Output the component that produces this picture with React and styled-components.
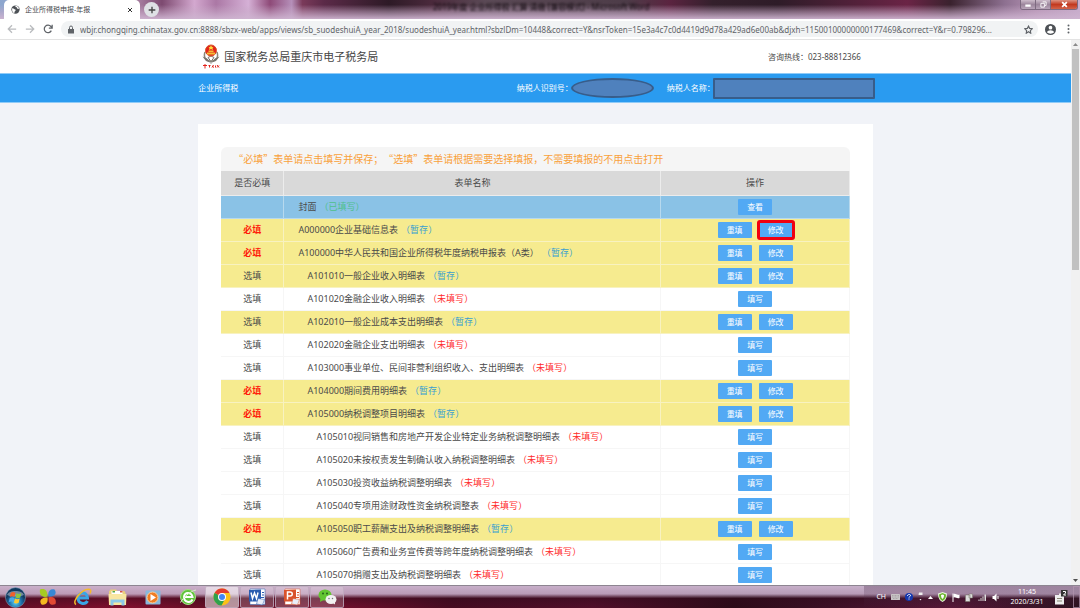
import React from "react";
import styled, { createGlobalStyle, css } from "styled-components";

const Global = createGlobalStyle`
  * { box-sizing: border-box; }
  html, body { margin: 0; padding: 0; }
  body {
    font-family: "Noto Sans", "Noto Sans CJK SC", sans-serif;
    font-size: 9px;
    line-height: 12px;
    color: #4a4a4a;
    background: #f1f3f8;
    text-spacing-trim: space-all;
  }
  button { font-family: inherit; border: 0; padding: 0; margin: 0; background: none; color: inherit; }
  svg { display: block; flex: none; }
`;

const Screen = styled.div`
  height: 100vh;
  display: flex;
  flex-direction: column;
  overflow: hidden;
`;

/* ---------- browser frame ---------- */
const TabStrip = styled.div`
  position: relative;
  height: 19px;
  flex: none;
  display: flex;
  align-items: flex-start;
  background:
    linear-gradient(180deg, rgba(200,170,200,0) 25%, rgba(200,170,200,0.5) 60%, rgba(206,180,208,0.95) 100%),
    linear-gradient(90deg, #8da7cf 0, #a37a9c 13%, #7d4a70 15%, #d3a8cf 18%, #ab78a5 20%, #d5b0d6 23%, #8e4a78 25%, #b58fb9 27%, #7a3a5a 28%, #5b2a48 30%, #2d1a26 36%, #4b2a3c 40%, #5b4a56 45%, #4d3c48 58%, #5b2440 62%, #34202c 66%, #2e1c28 72%, #6b2446 84%, #3a222e 88%, #8d7090 93%, #b593b4 96%, #c9b1d0 100%);
`;

const Tab = styled.div`
  width: 136px;
  height: 19px;
  margin-left: 4px;
  padding: 0 6px 0 7px;
  display: flex;
  align-items: center;
  gap: 5px;
  background: #fff;
  border-radius: 5px 5px 0 0;
  font-size: 7px;
  color: #45484c;
`;

const TabTitle = styled.span`
  flex: 1;
  white-space: nowrap;
`;

const IconButton = styled.button`
  width: ${(p) => p.$size || 12}px;
  height: ${(p) => p.$size || 12}px;
  display: flex;
  align-items: center;
  justify-content: center;
  flex: none;
`;

const NewTab = styled(IconButton)`
  margin: 2px 0 0 4px;
  border-radius: 50%;
  background: #dfe1e5;
`;

const BlurredTitle = styled.div`
  flex: 1;
  padding: 0 20px 0 274px;
  font-size: 8px;
  line-height: 14px;
  white-space: nowrap;
  overflow: hidden;
  color: #120a10;
  filter: blur(1px);
`;

const WindowControls = styled.div`
  display: flex;
  margin-right: 2px;
  border: 1px solid #7d6a80;
  border-top: 0;
  border-radius: 0 0 3px 3px;
  overflow: hidden;
`;

const WindowButton = styled.button`
  width: ${(p) => (p.$close ? 26 : 15)}px;
  height: 9px;
  display: flex;
  align-items: center;
  justify-content: center;
  border-right: ${(p) => (p.$close ? 0 : 1)}px solid #7d6a80;
  background: ${(p) =>
    p.$close
      ? "linear-gradient(#dc9383, #c2391f 50%, #d3634a)"
      : "linear-gradient(#cdbccb, #9c869c 50%, #b8a4b9)"};
`;

const Toolbar = styled.div`
  height: 21px;
  flex: none;
  display: flex;
  align-items: center;
  gap: 6px;
  padding: 0 6px;
  background: #fff;
  border-bottom: 1px solid #e3e3e3;
`;

const AddressBar = styled.div`
  flex: 1;
  min-width: 0;
  height: 16px;
  margin-left: 1px;
  padding: 0 5px 0 6px;
  display: flex;
  align-items: center;
  gap: 5px;
  border-radius: 8px;
  background: #f1f3f4;
`;

const AddressInput = styled.input`
  flex: 1;
  min-width: 0;
  height: 14px;
  padding: 0;
  border: 0;
  background: none;
  font-family: "Noto Sans", sans-serif;
  font-size: 8px;
  color: #5f6368;
  text-overflow: ellipsis;
`;

/* ---------- web page ---------- */
const Viewport = styled.div`
  flex: 1;
  min-height: 0;
  display: flex;
`;

const Page = styled.main`
  flex: 1;
  min-width: 0;
  overflow: hidden;
  background: #f1f3f8;
`;

const Container = styled.div`
  width: 63%;
  margin: 0 auto;
  display: flex;
  align-items: center;
`;

const SiteHeader = styled.header`
  height: 33px;
  background: #fff;
  display: flex;
  align-items: center;
`;

const Brand = styled.h1`
  flex: 1;
  margin: 0;
  padding-left: 4px;
  display: flex;
  align-items: center;
  gap: 4px;
  font-size: 11px;
  line-height: 16px;
  font-weight: 400;
  color: #444;
`;

const Hotline = styled.span`
  padding-right: 12px;
  font-size: 8px;
`;

const BlueBar = styled.div`
  height: 30px;
  display: flex;
  align-items: center;
  background: #2a9bf0;
  border-top: 1px solid #8fcbf8;
  border-bottom: 1px solid #8fcbf8;
  color: #fff;
  font-size: 8px;
`;

const BarTitle = styled.span`
  flex: 1;
`;

const Mask = styled.span`
  width: ${(p) => (p.$round ? 83 : 162)}px;
  height: ${(p) => (p.$round ? 20 : 21)}px;
  margin-left: -2px;
  margin-right: ${(p) => (p.$round ? 13 : -2)}px;
  border: 2px solid #385d8a;
  border-radius: ${(p) => (p.$round ? "50%" : "1px")};
  background: #4f81bd;
`;

const Card = styled.section`
  width: 63%;
  margin: 21px auto 0;
  padding: 23px 23px 40px;
  background: #fff;
`;

const Notice = styled.p`
  height: 24px;
  margin: 0;
  padding-left: 12px;
  border-radius: 6px 6px 0 0;
  background: #f5f5f5;
  color: #f9a13a;
  font-family: "Noto Sans CJK SC", sans-serif;
  font-size: 10px;
  line-height: 24px;
  white-space: nowrap;
`;

const Table = styled.table`
  width: 100%;
  border-collapse: collapse;
  table-layout: fixed;
`;

const HeadCell = styled.th`
  width: ${(p) => p.$width};
  height: 24px;
  padding: 0;
  background: #d9d9d9;
  border: 1px solid #ececec;
  border-width: 0 1px 1px 0;
  font-weight: 400;
  text-align: center;
`;

const tones = {
  blue: css`background: #8ac2e6; --line: #b7d9ee;`,
  yellow: css`background: #f6eb8f; --line: #f8f2c0;`,
  plain: css`background: #fff; --line: #f6f6f6;`,
};

const Row = styled.tr`
  ${(p) => tones[p.$tone]}
`;

const Cell = styled.td`
  height: 23px;
  padding: 0;
  border: 1px solid var(--line);
  border-width: 0 1px 1px 0;
  text-align: center;
`;

const NeedCell = styled(Cell)`
  color: ${(p) => (p.$must ? "#ff1a0a" : "#4a4a4a")};
  font-weight: ${(p) => (p.$must ? 700 : 400)};
`;

const NameCell = styled(Cell)`
  padding-left: ${(p) => 14 + p.$level * 9}px;
  text-align: left;
  white-space: nowrap;
`;

const Status = styled.span`
  margin-left: 3px;
  color: ${(p) => ({ 已填写: "#4fc08d", 暂存: "#3a9fd0", 未填写: "#ff2a2a" })[p.$kind]};
`;

const Actions = styled.div`
  display: flex;
  justify-content: center;
  gap: 7px;
`;

const ActionButton = styled.button`
  width: 34px;
  height: 16px;
  border-radius: 1px;
  background: #52a9f4;
  color: #fff;
  font-size: 8px;
  line-height: 14px;
  ${(p) => p.$marked && css`outline: 3px solid #f00010; outline-offset: -1px;`}
`;

const ScrollBar = styled.div`
  width: 9px;
  flex: none;
  display: flex;
  flex-direction: column;
  align-items: center;
  padding: 3px 1px;
  background: #f1f1f1;
`;

const Thumb = styled.div`
  width: 7px;
  height: 41%;
  margin: 3px 0 auto;
  background: #c1c1c1;
`;

/* ---------- task bar ---------- */
const TaskBar = styled.footer`
  height: 23px;
  flex: none;
  display: flex;
  align-items: center;
  border-top: 1px solid #8d8591;
  background:
    linear-gradient(180deg, rgba(206,184,210,0.95) 0, rgba(196,170,198,0.9) 36%, rgba(50,10,28,0.5) 56%, rgba(60,8,28,0.1) 100%),
    linear-gradient(90deg, #6a1028 0, #8b1030 12%, #6a1026 20%, #7e1030 30%, #470c22 42%, #54102c 55%, #2a0c18 68%, #3b1026 76%, #5b1a3c 88%, #2b1420 100%);
`;

const TaskButton = styled.button`
  width: ${(p) => (p.$start ? 30 : p.$open ? 34 : 35)}px;
  height: 22px;
  display: flex;
  align-items: center;
  justify-content: center;
  ${(p) =>
    p.$open &&
    css`
      margin-right: 1px;
      border: 1px solid rgba(190, 170, 190, 0.8);
      border-radius: 2px;
      background: rgba(255, 255, 255, ${p.$active ? 0.55 : 0.2});
    `}
`;

const Tray = styled.div`
  align-self: stretch;
  margin-left: auto;
  padding-left: 12px;
  display: flex;
  align-items: center;
  gap: 5px;
  color: #fff;
  font-size: 7px;
  background: linear-gradient(180deg, rgba(80, 50, 80, 0.35), rgba(80, 50, 80, 0));
`;

const Clock = styled.time`
  width: 44px;
  text-align: center;
  font-size: 7px;
  line-height: 10px;
`;

const ShowDesktop = styled.button`
  width: 7px;
  height: 22px;
  border: 1px solid rgba(180, 150, 175, 0.7);
`;

const Globe = () => (
  <svg width="9" height="9" viewBox="0 0 24 24">
    <circle cx="12" cy="12" r="11" fill="#4d5156" />
    <path d="M3 9c4-1 5 3 8 3s1 4-1 5 0 4-1 5C5 20 2 16 3 9zM12 2c-1 3 1 4 3 4s0 3 2 4 4-1 5 0c-1-4-5-8-10-8z" fill="#fff" />
  </svg>
);
const Stroke = ({ d, size = 10, color = "#5f6368", width = 2, fill = "none" }) => (
  <svg width={size} height={size} viewBox="0 0 24 24" fill={fill} stroke={color} strokeWidth={width}>
    <path d={d} />
  </svg>
);

const Emblem = () => (
  <svg width="18" height="25" viewBox="0 0 36 50">
    <path d="M6 16c-4 12 3 18 12 19 9-1 16-7 12-19" fill="none" stroke="#8b8578" strokeWidth="3" />
    <path d="M1 25l9 4 8 9 8-9 9-4-7 9-8 3-2 3-2-3-8-3z" fill="#77736c" />
    <path d="M12 27l6-3 6 3-6 8z" fill="#fff" stroke="#77736c" strokeWidth="2" />
    <circle cx="18" cy="13" r="11" fill="#e2231a" stroke="#d9552a" strokeWidth="2" />
    <path d="M18 3l2 3h3l-2 2 1 4-4-2-4 2 1-4-2-2h3z" fill="#ffdc3c" />
    <path d="M10 17h16v4H10zM13 13h10v3H13z" fill="#f4be36" />
    <path d="M2 43h8M6 40v9M13 43h4M15 42v5M20 44l4 3M23 42l-3 5M27 43v4M30 42l4 5M34 43l-4 4" stroke="#e2231a" strokeWidth="2" fill="none" />
  </svg>
);

const WindowsOrb = () => (
  <svg width="21" height="21" viewBox="0 0 40 40">
    <defs>
      <radialGradient id="orb" cx="50%" cy="75%"><stop offset="0" stopColor="#5fd5f5" /><stop offset=".6" stopColor="#1e6fa8" /><stop offset="1" stopColor="#12395f" /></radialGradient>
    </defs>
    <circle cx="20" cy="20" r="19" fill="url(#orb)" stroke="#8eb4cc" />
    <path d="M4 15C7 5 33 5 36 15c-9 4-23 4-32 0z" fill="#fff" opacity=".4" />
    <path d="M11 11c3-2 6-2 9 0l-2 8c-3-2-6-2-9 0z" fill="#f0602c" />
    <path d="M22 12c3 2 6 2 9 0l-2 8c-3 2-6 2-9 0z" fill="#8cc63f" />
    <path d="M9 21c3-2 6-2 9 0l-2 8c-3-2-6-2-9 0z" fill="#49a8e8" />
    <path d="M19 22c3 2 6 2 9 0l-2 8c-3 2-6 2-9 0z" fill="#fdc82f" />
  </svg>
);
const Petals = () => (
  <svg width="18" height="18" viewBox="0 0 36 36">
    <path d="M2 3c9-3 15 1 15 14C7 20 0 14 2 3z" fill="#a6cb22" />
    <path d="M19 17c-2-10 3-16 12-14 6 8 0 15-12 14z" fill="#3888d6" />
    <path d="M17 19c2 10-3 16-12 14-6-8 0-15 12-14z" fill="#f4b91e" />
    <path d="M19 19c10-3 17 3 14 13-9 5-15-2-14-13z" fill="#e24a33" />
  </svg>
);
const IE = () => (
  <svg width="19" height="18" viewBox="0 0 38 36">
    <path d="M29 26c-5 8-19 6-19-6s18-14 19 0H12" fill="none" stroke="#39a5e6" strokeWidth="6" />
    <path d="M6 33C-4 27 20-1 34 3c3 2 1 6 0 8" fill="none" stroke="#f3b92b" strokeWidth="3" />
  </svg>
);
const Folder = () => (
  <svg width="19" height="17" viewBox="0 0 38 34">
    <path d="M2 5l3-4h11l3 3h14l2 4v23H2z" fill="#e9cf7b" />
    <path d="M7 4h22v8H7z" fill="#fff" /><path d="M9 4h5v3H9z" fill="#56a844" /><path d="M24 4h5v3h-5z" fill="#d85443" />
    <path d="M1 10h36l-1 22H2z" fill="#f8e6a1" />
    <path d="M5 33V21h28v12h-6v-6H11v6z" fill="#8cc9ea" />
  </svg>
);
const Player = () => (
  <svg width="16" height="15" viewBox="0 0 32 30">
    <rect x="1" y="1" width="30" height="28" rx="2" fill="#88b8dc" />
    <circle cx="15" cy="15" r="11" fill="#ee7d24" stroke="#fbd0a3" strokeWidth="2" />
    <path d="M11 8l11 7-11 7z" fill="#fff" />
  </svg>
);
const GreenE = () => (
  <svg width="18" height="18" viewBox="0 0 36 36">
    <circle cx="18" cy="18" r="15" fill="#62c43c" stroke="#a6dd8c" strokeWidth="2" />
    <path d="M27 23c-4 8-17 6-17-5s15-10 17 0H12" fill="none" stroke="#fff" strokeWidth="4" />
    <path d="M3 29C8 20 22 6 34 4" fill="none" stroke="#d8f5c8" strokeWidth="2" />
  </svg>
);
const Chrome = () => (
  <svg width="18" height="18" viewBox="0 0 36 36">
    <circle cx="18" cy="18" r="17" fill="#fbc116" />
    <path d="M3.300 9.500A17 17 0 0 0 17 35l7-13-6-4z" fill="#2fa24c" />
    <path d="M3.300 9.500A17 17 0 0 1 33 10H18v8z" fill="#e33b2e" />
    <circle cx="18" cy="18" r="8" fill="#fff" /><circle cx="18" cy="18" r="6" fill="#4285f4" />
  </svg>
);
const Office = ({ color, d }) => (
  <svg width="18" height="18" viewBox="0 0 36 36">
    <path d="M4 2h30v31H4z" fill="#fff" stroke={color} />
    <path d="M28 9h4M28 14h4M26 19h6" stroke={color} strokeWidth="2" />
    <path d="M2 4l24-1v24L2 27z" fill={color} />
    <path d={d} fill="none" stroke="#fff" strokeWidth="3" />
    <path d="M20 21l13 2-4 11-12-2z" fill="#e9eef8" stroke={color} />
  </svg>
);
const WeChat = () => (
  <svg width="19" height="16" viewBox="0 0 38 32">
    <ellipse cx="14" cy="12" rx="13" ry="11" fill="#62c531" /><path d="M5 19l-1 7 7-4z" fill="#62c531" />
    <ellipse cx="26" cy="21" rx="11" ry="9" fill="#f2f2f2" /><path d="M30 28l4 3v-6z" fill="#f2f2f2" />
    <circle cx="10" cy="9" r="2" fill="#25601a" /><circle cx="18" cy="9" r="2" fill="#25601a" />
    <circle cx="22" cy="19" r="1.500" fill="#777" /><circle cx="29" cy="19" r="1.500" fill="#777" />
  </svg>
);

const forms = [
  ["", "封面", 0, "已填写"],
  ["必填", "A000000企业基础信息表", 0, "暂存", true],
  ["必填", "A100000中华人民共和国企业所得税年度纳税申报表（A类）", 0, "暂存"],
  ["选填", "A101010一般企业收入明细表", 1, "暂存"],
  ["选填", "A101020金融企业收入明细表", 1, "未填写"],
  ["选填", "A102010一般企业成本支出明细表", 1, "暂存"],
  ["选填", "A102020金融企业支出明细表", 1, "未填写"],
  ["选填", "A103000事业单位、民间非营利组织收入、支出明细表", 1, "未填写"],
  ["必填", "A104000期间费用明细表", 1, "暂存"],
  ["必填", "A105000纳税调整项目明细表", 1, "暂存"],
  ["选填", "A105010视同销售和房地产开发企业特定业务纳税调整明细表", 2, "未填写"],
  ["选填", "A105020未按权责发生制确认收入纳税调整明细表", 2, "未填写"],
  ["选填", "A105030投资收益纳税调整明细表", 2, "未填写"],
  ["选填", "A105040专项用途财政性资金纳税调整表", 2, "未填写"],
  ["必填", "A105050职工薪酬支出及纳税调整明细表", 2, "暂存"],
  ["选填", "A105060广告费和业务宣传费等跨年度纳税调整明细表", 2, "未填写"],
  ["选填", "A105070捐赠支出及纳税调整明细表", 2, "未填写"],
];
const toneOf = { 已填写: "blue", 暂存: "yellow", 未填写: "plain" };
const actionsOf = { 已填写: ["查看"], 暂存: ["重填", "修改"], 未填写: ["填写"] };

const url =
  "wbjr.chongqing.chinatax.gov.cn:8888/sbzx-web/apps/views/sb_suodeshuiA_year_2018/suodeshuiA_year.html?sbzlDm=10448&correct=Y&nsrToken=15e3a4c7c0d4419d9d78a429ad6e00ab&djxh=11500100000000177469&correct=Y&r=0.798296...";

export default function App() {
  return (
    <Screen>
      <Global />
      <TabStrip>
        <Tab>
          <Globe />
          <TabTitle>企业所得税申报-年报</TabTitle>
          <IconButton aria-label="关闭标签页" $size={8}>
            <Stroke d="M4 4l16 16M20 4L4 20" size={6} width={4} color="#333" />
          </IconButton>
        </Tab>
        <NewTab aria-label="新标签页" $size={15}>
          <Stroke d="M12 2v20M2 12h20" size={8} width={4} color="#444" />
        </NewTab>
        <BlurredTitle>2019年度 企业所得税 汇算 清缴 [兼容模式] - Microsoft Word</BlurredTitle>
        <WindowControls>
          <WindowButton aria-label="最小化"><Stroke d="M4 14h16" size={8} width={7} color="#fff" /></WindowButton>
          <WindowButton aria-label="还原"><Stroke d="M9 3h12v12h-5M3 8h12v13H3z" size={7} width={3} color="#fff" /></WindowButton>
          <WindowButton aria-label="关闭" $close><Stroke d="M4 4l16 16M20 4L4 20" size={7} width={6} color="#fff" /></WindowButton>
        </WindowControls>
      </TabStrip>

      <Toolbar>
        <IconButton aria-label="后退"><Stroke d="M22 12H4M12 3l-9 9 9 9" color="#b9bbbe" width={3} /></IconButton>
        <IconButton aria-label="前进"><Stroke d="M2 12h18M12 3l9 9-9 9" color="#b9bbbe" width={3} /></IconButton>
        <IconButton aria-label="刷新"><Stroke d="M20 16a9 9 0 1 1-1-10l2 3M22 2v8h-8" width={3} /></IconButton>
        <AddressBar>
          <svg width="8" height="9" viewBox="0 0 16 18"><path d="M2 8h12v9H2z" fill="#5f6368" /><path d="M5 8V5a3 3 0 0 1 6 0v3" fill="none" stroke="#5f6368" strokeWidth="2" /></svg>
          <AddressInput aria-label="地址" defaultValue={url} />
          <Stroke d="M12 3l3 6 7 1-5 5 1 7-6-4-6 4 1-7-5-5 7-1z" size={9} width={3} />
        </AddressBar>
        <IconButton aria-label="用户">
          <svg width="11" height="11" viewBox="0 0 24 24"><circle cx="12" cy="12" r="12" fill="#4d5156" /><circle cx="12" cy="8" r="4" fill="#fff" /><path d="M4 18c2-6 14-6 16 0-4 4-12 4-16 0z" fill="#fff" /></svg>
        </IconButton>
        <IconButton aria-label="菜单">
          <svg width="3" height="10" viewBox="0 0 3 10" fill="#5f6368"><circle cx="1.500" cy="1.500" r="1" /><circle cx="1.500" cy="5" r="1" /><circle cx="1.500" cy="8.500" r="1" /></svg>
        </IconButton>
      </Toolbar>

      <Viewport>
        <Page>
          <SiteHeader>
            <Container>
              <Brand><Emblem />国家税务总局重庆市电子税务局</Brand>
              <Hotline>咨询热线：023-88812366</Hotline>
            </Container>
          </SiteHeader>
          <BlueBar>
            <Container>
              <BarTitle>企业所得税</BarTitle>
              <span>纳税人识别号：</span>
              <Mask $round />
              <span>纳税人名称：</span>
              <Mask />
            </Container>
          </BlueBar>
          <Card>
            <Notice>“必填”表单请点击填写并保存；“选填”表单请根据需要选择填报，不需要填报的不用点击打开</Notice>
            <Table>
              <thead>
                <tr>
                  <HeadCell $width="10%">是否必填</HeadCell>
                  <HeadCell $width="60%">表单名称</HeadCell>
                  <HeadCell $width="30%">操作</HeadCell>
                </tr>
              </thead>
              <tbody>
                {forms.map(([need, name, level, status, marked]) => (
                  <Row key={name} $tone={toneOf[status]}>
                    <NeedCell $must={need === "必填"}>{need}</NeedCell>
                    <NameCell $level={level}>
                      {name}
                      <Status $kind={status}>（{status}）</Status>
                    </NameCell>
                    <Cell>
                      <Actions>
                        {actionsOf[status].map((a) => (
                          <ActionButton key={a} $marked={marked && a === "修改"}>{a}</ActionButton>
                        ))}
                      </Actions>
                    </Cell>
                  </Row>
                ))}
              </tbody>
            </Table>
          </Card>
        </Page>
        <ScrollBar>
          <svg width="5" height="3" viewBox="0 0 5 3"><path d="M0 3l2.500-3L5 3z" fill="#8a8a8a" /></svg>
          <Thumb />
          <svg width="5" height="3" viewBox="0 0 5 3"><path d="M0 0l2.500 3L5 0z" fill="#505050" /></svg>
        </ScrollBar>
      </Viewport>

      <TaskBar>
        <TaskButton aria-label="开始" $start><WindowsOrb /></TaskButton>
        <TaskButton aria-label="应用"><Petals /></TaskButton>
        <TaskButton aria-label="Internet Explorer"><IE /></TaskButton>
        <TaskButton aria-label="资源管理器"><Folder /></TaskButton>
        <TaskButton aria-label="媒体播放器"><Player /></TaskButton>
        <TaskButton aria-label="安全浏览器"><GreenE /></TaskButton>
        <TaskButton aria-label="Chrome" $open $active><Chrome /></TaskButton>
        <TaskButton aria-label="Word" $open><Office color="#2a5db0" d="M6 9l3 12 4-11 4 11 3-12" /></TaskButton>
        <TaskButton aria-label="PowerPoint" $open><Office color="#d9532c" d="M9 23V8h5c6 0 6 8 0 8H9" /></TaskButton>
        <TaskButton aria-label="微信" $open><WeChat /></TaskButton>
        <Tray>
          <span>CH</span>
          <svg width="9" height="6" viewBox="0 0 18 12"><rect width="18" height="12" rx="1" fill="#c9c4c6" /><path d="M2 3h14M2 6h14M4 9h10" stroke="#8d868a" strokeDasharray="2 1" /></svg>
          <svg width="8" height="8" viewBox="0 0 16 16"><circle cx="8" cy="8" r="8" fill="#1437ae" /><path d="M5 6c0-4 6-4 6-1 0 2-3 2-3 4M8 11v2" stroke="#fff" strokeWidth="2" fill="none" /></svg>
          <svg width="5" height="10" viewBox="0 0 10 20" fill="#eee"><path d="M2 1h7v5H1zM3 14h4l-2 3z" /></svg>
          <svg width="5" height="3" viewBox="0 0 5 3"><path d="M0 3l2.500-3L5 3z" fill="#fff" /></svg>
          <svg width="9" height="10" viewBox="0 0 18 20"><path d="M9 0l9 3c0 9-3 14-9 17C3 17 0 12 0 3z" fill="#e8f5dc" /><path d="M9 2l7 3c0 7-2 10-7 13-5-3-7-6-7-13z" fill="#6cb52f" /><path d="M9 5l3 1c0 4-1 6-3 8-2-2-3-4-3-8z" fill="#fff" /></svg>
          <svg width="8" height="9" viewBox="0 0 16 18"><path d="M2 1v17" stroke="#fff" strokeWidth="2" /><path d="M3 2c5-2 6 3 12 1v7c-6 2-7-3-12-1z" fill="#fff" /></svg>
          <svg width="8" height="9" viewBox="0 0 16 18"><path d="M1 4h9v13H1zM8 2h7v8H8z" fill="#ddd" stroke="#776" /></svg>
          <svg width="9" height="8" viewBox="0 0 18 16" fill="#ddd"><path d="M1 13h2v3H1zM5 10h2v6H5zM9 7h2v9H9zM13 3h3v13h-3z" /></svg>
          <svg width="8" height="9" viewBox="0 0 16 18"><path d="M1 6h3l5-5v16l-5-5H1z" fill="#fff" /><path d="M12 6v6" stroke="#fff" strokeWidth="2" /></svg>
          <Clock>11:45<br />2020/3/31</Clock>
          <svg width="14" height="15" viewBox="0 0 28 30"><path d="M2 10h8v-3h10v22H2z" fill="#eee" /><path d="M6 17h10M6 22h10" stroke="#887" strokeWidth="2" /><rect x="14" width="13" height="13" fill="#333" /><path d="M18 3h5v3l-4 4h5" stroke="#fff" strokeWidth="2" fill="none" /></svg>
          <ShowDesktop aria-label="显示桌面" />
        </Tray>
      </TaskBar>
    </Screen>
  );
}
